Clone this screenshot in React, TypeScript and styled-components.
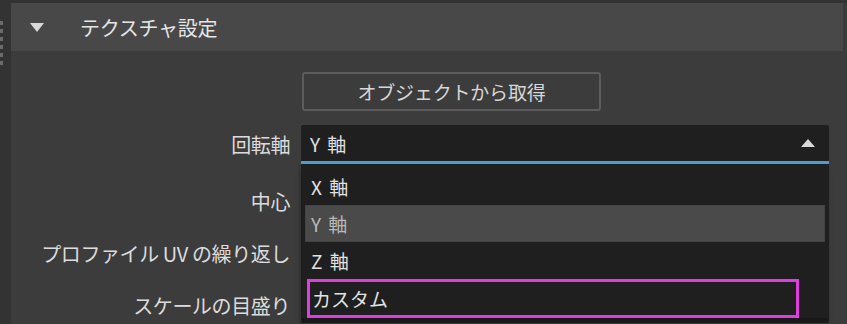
import styled, { createGlobalStyle } from "styled-components";

const GlobalStyle = createGlobalStyle`
  html, body {
    margin: 0;
    padding: 0;
    background: #333333;
  }
  body {
    font-family: "Noto Sans CJK JP", "Noto Sans", sans-serif;
    color: #dedede;
  }
`;

const AXES = ["X 軸", "Y 軸", "Z 軸", "カスタム"];
const SELECTED = "Y 軸";

const App = () => {
  return (
    <>
      <GlobalStyle />
      <Page>
        <Grip>
          {Array.from({ length: 6 }).map((_, i) => (
            <GripDot key={i} />
          ))}
        </Grip>
        <Panel>
          <Header>
            <Chevron width="14" height="9" viewBox="0 0 14 9">
              <polygon points="0,0 14,0 7,9" fill="#d8d8d8" />
            </Chevron>
            <Title>テクスチャ設定</Title>
          </Header>
          <Body>
            <Row $height={39}>
              <Label />
              <GetButton>オブジェクトから取得</GetButton>
            </Row>
            <Row $height={39} $top={14}>
              <Label>回転軸</Label>
              <SelectWrap>
                <Select>
                  <SelectValue>{SELECTED}</SelectValue>
                  <svg width="14" height="8" viewBox="0 0 14 8">
                    <polygon points="7,0 14,8 0,8" fill="#d8d8d8" />
                  </svg>
                </Select>
                <Menu>
                  {AXES.map((axis) => (
                    <Option
                      key={axis}
                      $active={axis === SELECTED}
                      $marked={axis === "カスタム"}
                    >
                      {axis}
                    </Option>
                  ))}
                </Menu>
              </SelectWrap>
            </Row>
            <Row $height={52} $top={11}>
              <Label>中心</Label>
              <Field />
            </Row>
            <Row $height={52}>
              <Label>プロファイル UV の繰り返し</Label>
              <Field />
            </Row>
            <Row $height={52}>
              <Label>スケールの目盛り</Label>
              <Field />
            </Row>
          </Body>
        </Panel>
      </Page>
    </>
  );
};

export default App;

const Page = styled.div`
  width: 847px;
  height: 324px;
  overflow: hidden;
  display: flex;
  background: #333333;
`;

const Grip = styled.div`
  width: 11px;
  flex-shrink: 0;
  display: flex;
  flex-direction: column;
  gap: 4px;
  padding-top: 21px;
  box-sizing: border-box;
`;

const GripDot = styled.span`
  width: 3px;
  height: 4px;
  background: #6b6b6b;
`;

const Panel = styled.div`
  flex: 1;
  display: flex;
  flex-direction: column;
  background: #3c3c3c;
  border-top: 3px solid #333333;
  overflow: hidden;
`;

const Header = styled.div`
  height: 48px;
  flex-shrink: 0;
  margin-right: 4px;
  display: flex;
  align-items: center;
  padding-left: 19px;
  background: #484848;
`;

const Chevron = styled.svg`
  margin-right: 36px;
  margin-top: 1px;
`;

const Title = styled.span`
  font-size: 20px;
  color: #e6e6e6;
  letter-spacing: -0.3px;
`;

const Body = styled.div`
  flex-shrink: 0;
  display: flex;
  flex-direction: column;
  padding-top: 21px;
`;

const Row = styled.div<{ $height: number; $top?: number }>`
  height: ${(p) => p.$height}px;
  margin-top: ${(p) => p.$top ?? 0}px;
  flex-shrink: 0;
  display: grid;
  grid-template-columns: 279px 528px;
  column-gap: 11px;
  align-items: center;
`;

const Label = styled.span`
  text-align: right;
  font-size: 20px;
  color: #dcdcdc;
  white-space: nowrap;
  letter-spacing: -0.4px;
`;

const GetButton = styled.button`
  width: 299px;
  height: 39px;
  margin-left: 1px;
  box-sizing: border-box;
  border: 2px solid #5c5c5c;
  border-radius: 3px;
  background: transparent;
  color: #d6d6d6;
  font-family: "Noto Sans CJK JP", "Noto Sans", sans-serif;
  font-size: 19px;
  letter-spacing: -0.2px;
  padding: 0;
`;

const SelectWrap = styled.div`
  position: relative;
  height: 39px;
`;

const Select = styled.div`
  height: 39px;
  box-sizing: border-box;
  display: flex;
  align-items: center;
  justify-content: space-between;
  padding: 0 14px 0 9px;
  background: #1f1f1f;
  border-bottom: 3px solid #4b9dd6;
  border-radius: 2px 2px 0 0;
`;

const SelectValue = styled.span`
  font-size: 19px;
  color: #e2e2e2;
  word-spacing: 3px;
`;

const Menu = styled.div`
  position: absolute;
  top: 100%;
  left: 0;
  width: 528px;
  height: 154px;
  box-sizing: border-box;
  padding: 4px 4px 0;
  background: #1f1f1f;
  box-shadow: -1px 4px 4px rgba(0, 0, 0, 0.25);
  z-index: 2;
`;

const Option = styled.div<{ $active: boolean; $marked: boolean }>`
  height: ${(p) => (p.$marked ? 39 : 37)}px;
  box-sizing: border-box;
  display: flex;
  align-items: center;
  font-size: 19px;
  word-spacing: 3px;
  color: ${(p) => (p.$active ? "#b9b9b9" : "#e2e2e2")};
  background: ${(p) => (p.$active ? "#4a4a4a" : "transparent")};
  border: ${(p) =>
    p.$marked
      ? "3px solid #e03ce0"
      : p.$active
        ? "1px solid #434343"
        : "1px solid transparent"};
  width: ${(p) => (p.$marked ? "492px" : "auto")};
  margin-left: ${(p) => (p.$marked ? 2 : 0)}px;
  padding-left: ${(p) => (p.$marked ? 2 : 5)}px;
`;

const Field = styled.div`
  height: 36px;
  background: #1f1f1f;
`;
